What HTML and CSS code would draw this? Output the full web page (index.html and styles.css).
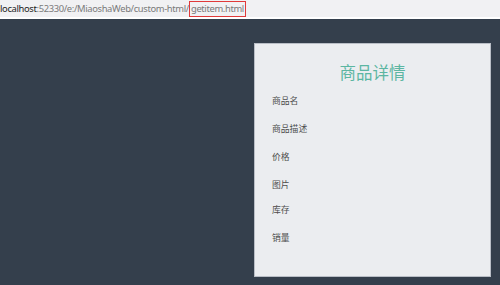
FILE: index.html
```html
<!DOCTYPE html>
<html lang="zh">
<head>
    <meta charset="UTF-8">
    <title>getitem</title>
    <link rel="stylesheet" href="styles.css">
</head>
<body>
    <div class="urlbar">
        <span class="host">localhost</span>:52330/e:/MiaoshaWeb/custom-html/<span class="mark">getitem.html</span>
    </div>

    <div class="page">
        <div class="card">
            <h2 class="title">商品详情</h2>
            <div class="row r1">商品名</div>
            <div class="row r2">商品描述</div>
            <div class="row r3">价格</div>
            <div class="row r4">图片</div>
            <div class="row r5">库存</div>
            <div class="row r6">销量</div>
        </div>
    </div>
</body>
</html>
```

FILE: styles.css
```css
/* Global */
html, body {
    margin: 0;
    padding: 0;
    height: 100%;
    overflow: hidden;
    font-family: 'Noto Sans', 'Noto Sans CJK SC', sans-serif;
}

body {
    background-color: #343f4c;
}

/* Address bar */
.urlbar {
    height: 17px;
    line-height: 17px;
    background-color: #f1f1f3;
    border-bottom: 2px solid #ffffff;
    color: #7a7a7a;
    font-size: 9.4px;
    white-space: nowrap;
    letter-spacing: -0.35px;
}

.urlbar .host {
    color: #222;
}

.urlbar .mark {
    display: inline-block;
    line-height: 14px;
    border: 1px solid #e03a3a;
    padding: 0 1px;
}

/* Page */
.page {
    display: flex;
    justify-content: flex-end;
    padding-top: 24px;
    padding-right: 9px;
}

.card {
    width: 237px;
    height: 234px;
    box-sizing: border-box;
    padding-left: 17px;
    background-color: #ebedf0;
    border: 1px solid #b9bec6;
}

.title {
    margin: 17px 0 0 0;
    padding-right: 17px;
    text-align: center;
    font-weight: normal;
    font-size: 16.5px;
    line-height: 24px;
    color: #5cb6a2;
}

.row {
    font-size: 8.8px;
    line-height: 12px;
    color: #4d4d4d;
}

.r1 { margin-top: 10px; }
.r2 { margin-top: 16px; }
.r3 { margin-top: 16px; }
.r4 { margin-top: 16px; }
.r5 { margin-top: 13px; }
.r6 { margin-top: 16px; }
```
